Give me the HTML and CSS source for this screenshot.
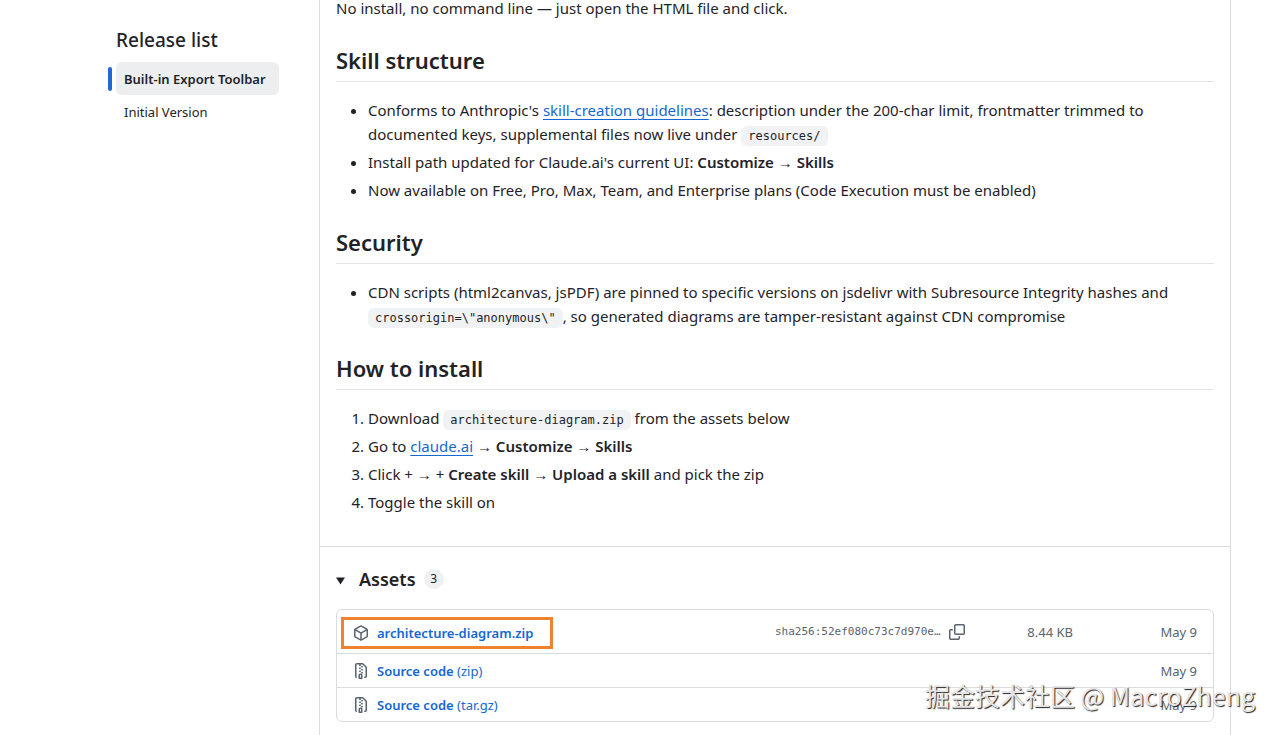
FILE: index.html
```html
<!DOCTYPE html>
<html lang="en">
<head>
<meta charset="utf-8">
<meta name="viewport" content="width=device-width, initial-scale=1">
<title>Release: Built-in Export Toolbar</title>
<link rel="stylesheet" href="styles.css">
</head>
<body>
<div class="page">
  <aside class="sidebar">
    <h2 class="sidebar-title">Release list</h2>
    <nav class="release-nav" aria-label="Releases">
      <a class="release-link current" href="#built-in" aria-current="page">Built-in Export Toolbar</a>
      <a class="release-link" href="#initial">Initial Version</a>
    </nav>
  </aside>
  <main class="release">
    <article class="notes">
      <p>No install, no command line — just open the HTML file and click.</p>
      <h2>Skill structure</h2>
      <ul>
        <li>Conforms to Anthropic's <a href="#guidelines">skill-creation guidelines</a>: description under the 200-char limit, frontmatter trimmed to documented keys, supplemental files now live under <code>resources/</code></li>
        <li>Install path updated for Claude.ai's current UI: <strong>Customize <span class="arrow">→</span> Skills</strong></li>
        <li>Now available on Free, Pro, Max, Team, and Enterprise plans (Code Execution must be enabled)</li>
      </ul>
      <h2>Security</h2>
      <ul>
        <li>CDN scripts (html2canvas, jsPDF) are pinned to specific versions on jsdelivr with Subresource Integrity hashes and <code>crossorigin=\"anonymous\"</code>, so generated diagrams are tamper-resistant against CDN compromise</li>
      </ul>
      <h2>How to install</h2>
      <ol>
        <li>Download <code>architecture-diagram.zip</code> from the assets below</li>
        <li>Go to <a href="#claude">claude.ai</a> <span class="arrow">→</span> <strong>Customize <span class="arrow">→</span> Skills</strong></li>
        <li>Click + <span class="arrow">→</span> + <strong>Create skill <span class="arrow">→</span> Upload a skill</strong> and pick the zip</li>
        <li>Toggle the skill on</li>
      </ol>
    </article>
    <details class="assets" open>
      <summary>
        <svg class="caret" viewBox="0 0 10 8" aria-hidden="true"><path d="M0 0h10L5 8z"/></svg>
        <span class="assets-title">Assets</span>
        <span class="counter">3</span>
      </summary>
      <ul class="asset-list">
        <li class="asset asset-upload">
          <div class="asset-name highlight">
            <svg class="icon" viewBox="0 0 16 16" aria-hidden="true"><path d="m8.878.392 5.25 3.045c.54.314.872.89.872 1.514v6.098a1.75 1.75 0 0 1-.872 1.514l-5.25 3.045a1.75 1.75 0 0 1-1.756 0l-5.25-3.045A1.75 1.75 0 0 1 1 11.049V4.951c0-.624.332-1.201.872-1.514L7.122.392a1.75 1.75 0 0 1 1.756 0ZM7.875 1.69l-4.63 2.685L8 7.133l4.755-2.758-4.63-2.685a.248.248 0 0 0-.25 0ZM2.5 5.677v5.372c0 .09.047.171.125.216l4.625 2.683V8.432Zm6.25 8.271 4.625-2.683a.25.25 0 0 0 .125-.216V5.677L8.75 8.432Z"/></svg>
            <a href="#diagram-zip"><b>architecture-diagram.zip</b></a>
          </div>
          <div class="digest">
            <span class="hash">sha256:52ef080c73c7d970e…</span>
            <button class="copy" type="button" aria-label="Copy digest"><svg class="icon" viewBox="0 0 16 16" aria-hidden="true"><path d="M0 6.75C0 5.784.784 5 1.75 5h1.5a.75.75 0 0 1 0 1.5h-1.5a.25.25 0 0 0-.25.25v7.5c0 .138.112.25.25.25h7.5a.25.25 0 0 0 .25-.25v-1.5a.75.75 0 0 1 1.5 0v1.5A1.75 1.75 0 0 1 9.25 16h-7.5A1.75 1.75 0 0 1 0 14.25Z"/><path d="M5 1.75C5 .784 5.784 0 6.75 0h7.5C15.216 0 16 .784 16 1.75v7.5A1.75 1.75 0 0 1 14.25 11h-7.5A1.75 1.75 0 0 1 5 9.25Zm1.75-.25a.25.25 0 0 0-.25.25v7.5c0 .138.112.25.25.25h7.5a.25.25 0 0 0 .25-.25v-7.5a.25.25 0 0 0-.25-.25Z"/></svg></button>
          </div>
          <span class="size">8.44 KB</span>
          <time class="date">May 9</time>
        </li>
        <li class="asset">
          <div class="asset-name">
            <svg class="icon" viewBox="0 0 16 16" aria-hidden="true"><path d="M3.5 1.75v11.5c0 .09.048.173.126.217a.75.75 0 0 1-.752 1.298A1.748 1.748 0 0 1 2 13.25V1.75C2 .784 2.784 0 3.75 0h5.586c.464 0 .909.185 1.237.513l2.914 2.914c.329.328.513.773.513 1.237v8.586A1.75 1.75 0 0 1 12.25 15h-.5a.75.75 0 0 1 0-1.5h.5a.25.25 0 0 0 .25-.25V4.664a.25.25 0 0 0-.073-.177L9.513 1.573a.25.25 0 0 0-.177-.073H7.25a.75.75 0 0 1 0 1.5h-.5a.75.75 0 0 1 0-1.5h-3a.25.25 0 0 0-.25.25Zm3.75 8.75h.5c.966 0 1.75.784 1.75 1.75v3a.75.75 0 0 1-.75.75h-2.5a.75.75 0 0 1-.75-.75v-3c0-.966.784-1.75 1.75-1.75ZM6 5.25a.75.75 0 0 1 .75-.75h.5a.75.75 0 0 1 0 1.5h-.5A.75.75 0 0 1 6 5.25Zm.75 2.25h.5a.75.75 0 0 1 0 1.5h-.5a.75.75 0 0 1 0-1.5ZM8 3.75A.75.75 0 0 1 8.75 3h.5a.75.75 0 0 1 0 1.5h-.5A.75.75 0 0 1 8 3.75Zm.75 2.25h.5a.75.75 0 0 1 0 1.5h-.5a.75.75 0 0 1 0-1.5Zm0 3h.5a.75.75 0 0 1 0 1.5h-.5a.75.75 0 0 1 0-1.5ZM7 12.25v2.25h1v-2.25a.25.25 0 0 0-.25-.25h-.5a.25.25 0 0 0-.25.25Z"/></svg>
            <a href="#source-zip"><b>Source code</b> (zip)</a>
          </div>
          <time class="date">May 9</time>
        </li>
        <li class="asset">
          <div class="asset-name">
            <svg class="icon" viewBox="0 0 16 16" aria-hidden="true"><path d="M3.5 1.75v11.5c0 .09.048.173.126.217a.75.75 0 0 1-.752 1.298A1.748 1.748 0 0 1 2 13.25V1.75C2 .784 2.784 0 3.75 0h5.586c.464 0 .909.185 1.237.513l2.914 2.914c.329.328.513.773.513 1.237v8.586A1.75 1.75 0 0 1 12.25 15h-.5a.75.75 0 0 1 0-1.5h.5a.25.25 0 0 0 .25-.25V4.664a.25.25 0 0 0-.073-.177L9.513 1.573a.25.25 0 0 0-.177-.073H7.25a.75.75 0 0 1 0 1.5h-.5a.75.75 0 0 1 0-1.5h-3a.25.25 0 0 0-.25.25Zm3.75 8.75h.5c.966 0 1.75.784 1.75 1.75v3a.75.75 0 0 1-.75.75h-2.5a.75.75 0 0 1-.75-.75v-3c0-.966.784-1.75 1.75-1.75ZM6 5.25a.75.75 0 0 1 .75-.75h.5a.75.75 0 0 1 0 1.5h-.5A.75.75 0 0 1 6 5.25Zm.75 2.25h.5a.75.75 0 0 1 0 1.5h-.5a.75.75 0 0 1 0-1.5ZM8 3.75A.75.75 0 0 1 8.75 3h.5a.75.75 0 0 1 0 1.5h-.5A.75.75 0 0 1 8 3.75Zm.75 2.25h.5a.75.75 0 0 1 0 1.5h-.5a.75.75 0 0 1 0-1.5Zm0 3h.5a.75.75 0 0 1 0 1.5h-.5a.75.75 0 0 1 0-1.5ZM7 12.25v2.25h1v-2.25a.25.25 0 0 0-.25-.25h-.5a.25.25 0 0 0-.25.25Z"/></svg>
            <a href="#source-tar"><b>Source code</b> (tar.gz)</a>
          </div>
          <time class="date">May 9</time>
        </li>
      </ul>
    </details>
  </main>
</div>
<div class="watermark">掘金技术社区 @ MacroZheng</div>
</body>
</html>
```
FILE: styles.css
```css
* { box-sizing: border-box; }
body {
  margin: 0;
  height: 100vh;
  overflow: hidden;
  position: relative;
  background: #fff;
  color: #1f2328;
  font-family: "Noto Sans", "Noto Sans CJK SC", sans-serif;
  font-size: 15px;
  line-height: 24px;
}
h2, p, ul, ol { margin: 0; }
strong, b { font-weight: 600; }
a { color: #1567d3; }

.page {
  display: flex;
  gap: 40px;
  min-height: 100vh;
  padding: 0 48px 0 108px;
}
.sidebar { flex: none; width: 171px; padding-top: 28px; }
.sidebar-title {
  padding-left: 8px;
  font-size: 19px;
  font-weight: 500;
  line-height: 24px;
}
.release-nav {
  display: flex;
  flex-direction: column;
  padding: 10px 0 0 8px;
  font-size: 13px;
  line-height: 25px;
}
.release-link {
  position: relative;
  padding: 5px 8px 3px;
  border-radius: 6px;
  color: #1f2328;
  text-decoration: none;
  white-space: nowrap;
}
.release-link.current { background: #eceef0; font-weight: 600; }
.release-link.current::before {
  content: "";
  position: absolute;
  left: -8px;
  top: 5px;
  width: 4px;
  height: 24px;
  border-radius: 2px;
  background: #1f68d6;
}

.release {
  flex: 1;
  min-width: 0;
  border: 1px solid #d9dde0;
  border-width: 0 1px;
}
.notes { margin-top: -4px; padding: 0 16px 32px; }
.notes h2 {
  margin: 24px 0 16px;
  padding-bottom: 5px;
  border-bottom: 1px solid #e2e5e8;
  font-size: 22px;
  font-weight: 600;
  line-height: 32px;
}
.notes ul, .notes ol { padding-left: 32px; }
.notes li + li { margin-top: 4px; }
.notes a { text-underline-offset: 3px; }
.arrow {
  font-family: "Liberation Sans", sans-serif;
  font-weight: 400;
  line-height: 16px;
}
code {
  padding: 3px 7px;
  border-radius: 6px;
  background: #f0f2f3;
  font-family: "DejaVu Sans Mono", monospace;
  font-size: 12px;
  line-height: 16px;
}

.assets { border-top: 1px solid #d9dde0; padding: 16px; }
summary {
  display: flex;
  align-items: center;
  height: 32px;
  list-style: none;
}
.caret { width: 9px; height: 8px; margin-top: 4px; fill: #1f2328; }
.assets-title { margin-left: 14px; font-size: 18px; font-weight: 600; }
.counter {
  min-width: 20px;
  margin-left: 8px;
  border-radius: 10px;
  background: #eff1f2;
  font-size: 12px;
  line-height: 20px;
  text-align: center;
}
.asset-list {
  margin-top: 14px;
  padding: 0;
  border: 1px solid #d9dde0;
  border-radius: 6px;
  list-style: none;
  font-size: 13px;
}
.asset {
  display: flex;
  align-items: center;
  height: 34px;
  padding: 0 16px 0 4px;
  color: #59636e;
}
.asset + .asset { border-top: 1px solid #d9dde0; }
.asset-upload { height: 43px; }
.asset-name {
  display: flex;
  align-items: center;
  gap: 8px;
  height: 32px;
  margin-right: auto;
  padding: 0 12px;
}
.asset-name a { text-decoration: none; white-space: nowrap; }
.highlight {
  border: 3px solid #f08130;
  width: 212px;
  margin-top: 3px;
  padding: 0 9px;
}
.icon { display: block; flex: none; width: 16px; height: 16px; fill: #59636e; }
.digest { display: flex; align-items: center; gap: 8px; width: 190px; }
.hash { font-family: "DejaVu Sans Mono", monospace; font-size: 11px; }
.copy { padding: 0; border: 0; background: none; }
.size { width: 108px; text-align: right; }
.date { width: 124px; text-align: right; }

.watermark {
  position: absolute;
  right: 24px;
  bottom: 22px;
  color: #e6e6e6;
  font-family: "Noto Sans CJK SC", sans-serif;
  font-size: 25px;
  line-height: 36px;
  text-shadow: 1px 1px 1px #222;
}
```
